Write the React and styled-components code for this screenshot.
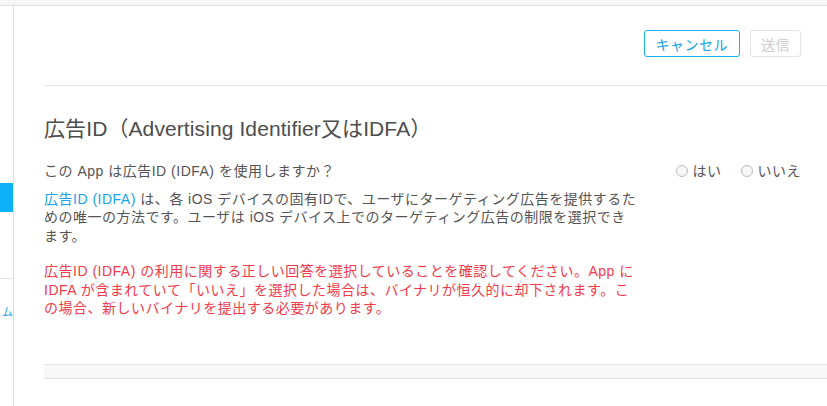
import React, { useState } from "react";
import styled, { createGlobalStyle } from "styled-components";

const GlobalStyle = createGlobalStyle`
  html, body {
    margin: 0;
    padding: 0;
    background: #fff;
  }
  body {
    font-family: "Liberation Sans", "Noto Sans CJK JP", sans-serif;
    color: #555;
  }
  * {
    box-sizing: border-box;
  }
`;

const Page = styled.div`
  display: flex;
  flex-direction: column;
  width: 827px;
  height: 406px;
  overflow: hidden;
`;

const TopStrip = styled.div`
  height: 6px;
  background: #f6f6f6;
  border-bottom: 1px solid #e1e1e1;
  flex-shrink: 0;
`;

const Body = styled.div`
  display: flex;
  flex: 1;
  min-height: 0;
`;

const Sidebar = styled.nav`
  width: 14px;
  flex-shrink: 0;
  border-right: 1px solid #dedede;
  display: flex;
  flex-direction: column;
  overflow: hidden;
  padding-top: 177px;
`;

const NavItem = styled.div`
  height: ${(p) => p.$height}px;
  background: ${(p) => (p.$active ? "#0db1f7" : "transparent")};
  border-bottom: ${(p) => (p.$divider ? "1px solid #e4e4e4" : "none")};
  color: #1aa6ee;
  font-size: 11px;
  line-height: 1;
  padding: ${(p) => (p.$divider ? "0" : "27px 0 0 2px")};
  white-space: nowrap;
  font-family: "Noto Sans CJK JP", sans-serif;
`;

const Main = styled.main`
  flex: 1;
  display: flex;
  flex-direction: column;
  padding-left: 30px;
`;

const Header = styled.header`
  height: 80px;
  border-bottom: 1px solid #e3e3e3;
  display: flex;
  justify-content: flex-end;
  align-items: flex-start;
  gap: 10px;
  padding: 24px 26px 0 0;
`;

const Button = styled.button`
  height: 27px;
  padding: 0 ${(p) => (p.$primary ? "11px" : "10px")};
  border-radius: 3px;
  background: #fff;
  border: 1px solid ${(p) => (p.$primary ? "#14b1f2" : "#e3e3e3")};
  color: ${(p) => (p.$primary ? "#14a3ea" : "#cdcdcd")};
  font-family: "Noto Sans CJK JP", sans-serif;
  font-size: 14px;
  letter-spacing: 0.5px;
  cursor: ${(p) => (p.disabled ? "default" : "pointer")};
`;

const Section = styled.section`
  padding-top: 29px;
`;

const Title = styled.h2`
  margin: 0 0 19px;
  font-size: 21px;
  font-weight: 400;
  line-height: 28px;
  color: #4d4d4d;
  letter-spacing: 0.1px;
`;

const Row = styled.div`
  display: grid;
  grid-template-columns: 616px 1fr;
  align-items: start;
  padding-right: 26px;
`;

const TextCol = styled.div`
  font-size: 14px;
  letter-spacing: 0.5px;
  line-height: 18.5px;
`;

const Question = styled.p`
  margin: 0 0 9px;
  color: #555;
`;

const Para = styled.p`
  margin: 0 0 ${(p) => p.$gap || 0}px;
  color: ${(p) => (p.$warn ? "#f23a4b" : "#555")};
`;

const Link = styled.a`
  color: #16a3ec;
  text-decoration: none;
`;

const Radios = styled.div`
  justify-self: end;
  display: flex;
  align-items: center;
  gap: 19px;
`;

const RadioLabel = styled.label`
  display: flex;
  align-items: center;
  gap: 5px;
  font-size: 14px;
  letter-spacing: 0.5px;
  line-height: 18px;
  color: #555;
  cursor: pointer;
`;

const RadioDot = styled.span`
  width: 12px;
  height: 12px;
  border-radius: 50%;
  border: 1px solid #bdbdbd;
  background: ${(p) => (p.$checked ? "radial-gradient(#14a3ea 35%, #f7f7f7 40%)" : "#f7f7f7")};
`;

const Footer = styled.div`
  margin-top: 46px;
  height: 15px;
  background: #f8f8f8;
  border-top: 1px solid #e3e3e3;
  border-bottom: 1px solid #e3e3e3;
`;

export default function App() {
  const [answer, setAnswer] = useState(null);

  return (
    <Page>
      <GlobalStyle />
      <TopStrip />
      <Body>
        <Sidebar>
          <NavItem $active $height={29} />
          <NavItem $divider $height={67} />
          <NavItem $height={40}>ム</NavItem>
        </Sidebar>
        <Main>
          <Header>
            <Button $primary>キャンセル</Button>
            <Button disabled>送信</Button>
          </Header>
          <Section>
            <Title>広告ID（Advertising Identifier又はIDFA）</Title>
            <Row>
              <TextCol>
                <Question>この App は広告ID (IDFA) を使用しますか？</Question>
                <Para $gap={17}>
                  <Link>広告ID (IDFA)</Link> は、各 iOS
                  デバイスの固有IDで、ユーザにターゲティング広告を提供するた
                  <br />
                  めの唯一の方法です。ユーザは iOS
                  デバイス上でのターゲティング広告の制限を選択でき
                  <br />
                  ます。
                </Para>
                <Para $warn>
                  広告ID (IDFA)
                  の利用に関する正しい回答を選択していることを確認してください。App に
                  <br />
                  IDFA
                  が含まれていて「いいえ」を選択した場合は、バイナリが恒久的に却下されます。こ
                  <br />
                  の場合、新しいバイナリを提出する必要があります。
                </Para>
              </TextCol>
              <Radios>
                <RadioLabel onClick={() => setAnswer("yes")}>
                  <RadioDot $checked={answer === "yes"} />
                  はい
                </RadioLabel>
                <RadioLabel onClick={() => setAnswer("no")}>
                  <RadioDot $checked={answer === "no"} />
                  いいえ
                </RadioLabel>
              </Radios>
            </Row>
            <Footer />
          </Section>
        </Main>
      </Body>
    </Page>
  );
}
